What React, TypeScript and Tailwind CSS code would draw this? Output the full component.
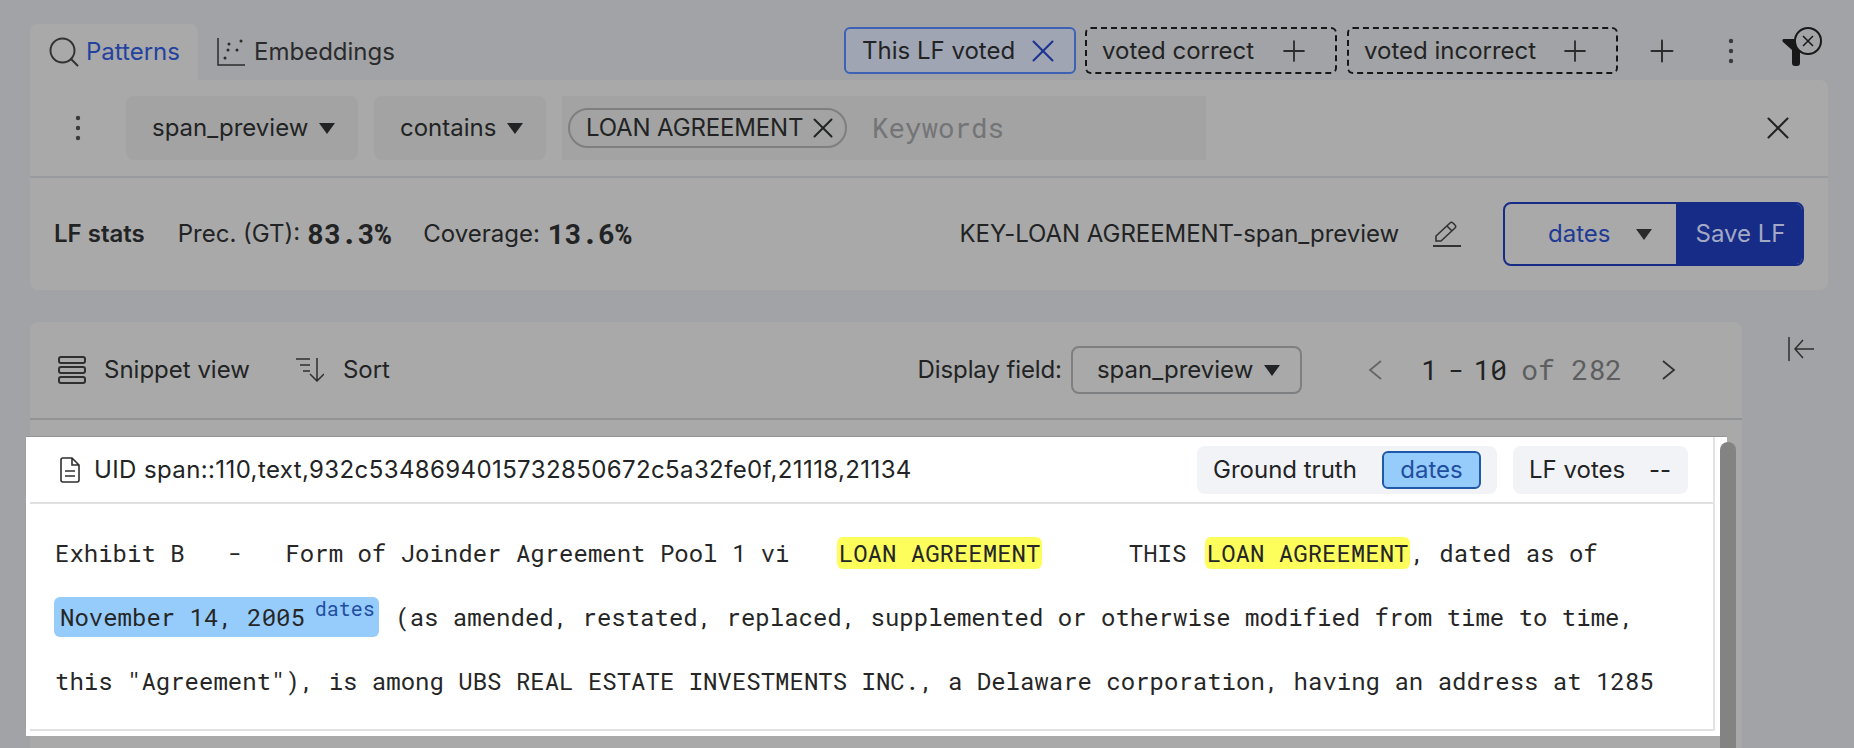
import React from "react"
import { Plus, Search, X } from "lucide-react"

const mono = "font-['Roboto_Mono','DejaVu_Sans_Mono',monospace]"

const Caret = () => (
  <svg width="16" height="11" viewBox="0 0 16 11" className="shrink-0">
    <path d="M0 0h16L8 11z" fill="currentColor" />
  </svg>
)

const Dots = () => (
  <svg width="6" height="26" viewBox="0 0 6 26" fill="#3a3a3a">
    <circle cx="3" cy="3" r="2.2" />
    <circle cx="3" cy="13" r="2.2" />
    <circle cx="3" cy="23" r="2.2" />
  </svg>
)

const EmbeddingIcon = () => (
  <svg width="28" height="28" viewBox="0 0 28 28" fill="none" stroke="currentColor" strokeWidth="1.5">
    <path d="M1 0v27h27" />
    <g fill="currentColor" stroke="none">
      <circle cx="8" cy="20" r="1.5" />
      <circle cx="12" cy="6" r="1.5" />
      <circle cx="11" cy="12" r="1.5" />
      <circle cx="20" cy="12" r="1.5" />
      <circle cx="24" cy="3" r="1.5" />
    </g>
  </svg>
)

const FilterOff = () => (
  <svg width="40" height="40" viewBox="0 0 40 40">
    <path d="M2 12h16v24a3 3 0 0 1-3 3h-2a3 3 0 0 1-3-3V23L1 15c-1-1-1-3 1-3z" fill="#181818" />
    <circle cx="26" cy="14" r="13" fill="#a3a4a7" stroke="#181818" strokeWidth="2" />
    <path d="M21 9l10 10M31 9L21 19" stroke="#181818" strokeWidth="1.5" />
  </svg>
)

const Chevron = ({ d, className }: { d: string; className: string }) => (
  <svg width="14" height="20" viewBox="0 0 14 20" fill="none" stroke="currentColor" strokeWidth="1.8" className={className}>
    <path d={d} />
  </svg>
)

const VoteChip = ({ label, width }: { label: string; width: string }) => (
  <div className={`flex h-[47px] items-center justify-between rounded-md border-2 border-dashed border-[#161616] pl-[15px] pr-[24px] ${width}`}>
    <span>{label}</span>
    <Plus size={34} strokeWidth={1.3} className="text-[#2c2c2c]" />
  </div>
)

const Highlight = ({ children }: { children: React.ReactNode }) => (
  <span className="ml-[4px] rounded-md bg-[#fdfd5c] px-[2px]">{children}</span>
)

export default function App() {
  return (
    <div className="h-[748px] overflow-hidden bg-[#a2a3a6] pl-[30px] font-['Inter',sans-serif] text-[24px] text-[#222324]">
      <div className="flex h-[80px] w-[1798px] items-start pr-[6px] pt-[24px]">
        <div className="flex h-[56px] w-[168px] items-center gap-[4px] rounded-t-lg bg-[#a9a9a9] pl-[16px]">
          <Search size={36} strokeWidth={1.3} className="text-[#333]" />
          <span className="text-[#2342a0]">Patterns</span>
        </div>
        <div className="flex h-[56px] items-center gap-[9px] pl-[19px] text-[#2a2b2c]">
          <EmbeddingIcon />
          <span>Embeddings</span>
        </div>
        <div className="ml-auto mt-[3px] flex h-[47px] items-center">
          <div className="flex h-[47px] w-[232px] items-center justify-between rounded-md border-2 border-[#3d61b4] bg-[#a0a5b4] pl-[16px] pr-[12px]">
            <span>This LF voted</span>
            <X size={38} strokeWidth={1.3} className="text-[#1b3391]" />
          </div>
          <div className="ml-[9px]">
            <VoteChip label="voted correct" width="w-[252px]" />
          </div>
          <div className="ml-[10px]">
            <VoteChip label="voted incorrect" width="w-[271px]" />
          </div>
          <Plus size={36} strokeWidth={1.3} className="ml-[26px] text-[#2c2c2c]" />
          <div className="ml-[48px]">
            <Dots />
          </div>
          <div className="ml-[48px] mt-[-7px]">
            <FilterOff />
          </div>
        </div>
      </div>

      <div className="w-[1798px] rounded-b-lg rounded-tr-lg bg-[#a9a9a9]">
        <div className="flex h-[98px] items-start border-b-2 border-[#999a9d] pt-[16px]">
          <div className="flex h-[64px] w-[96px] items-center justify-center">
            <Dots />
          </div>
          <div className="flex h-[64px] w-[232px] items-center gap-[11px] rounded-lg bg-[#a3a3a3] pl-[26px]">
            <span>span_preview</span>
            <Caret />
          </div>
          <div className="ml-[16px] flex h-[64px] w-[172px] items-center gap-[11px] rounded-lg bg-[#a3a3a3] pl-[26px]">
            <span>contains</span>
            <Caret />
          </div>
          <div className="ml-[16px] flex h-[64px] w-[644px] items-center bg-[#a3a3a3] pl-[6px]">
            <div className="flex h-[40px] w-[279px] items-center justify-between rounded-full border-2 border-[#7e7f81] pl-[16px] pr-[5px]">
              <span className="whitespace-nowrap tracking-[-0.15px]">LOAN AGREEMENT</span>
              <X size={34} strokeWidth={1.4} className="shrink-0" />
            </div>
            <span className={`ml-[25px] text-[27.5px] text-[#737476] ${mono}`}>Keywords</span>
          </div>
          <div className="ml-auto flex h-[64px] items-center pr-[31px]">
            <X size={38} strokeWidth={1.3} />
          </div>
        </div>
        <div className="flex h-[112px] items-center pl-[24px] pr-[24px]">
          <span className="font-semibold">LF stats</span>
          <span className="ml-[33px]">Prec. (GT):</span>
          <span className={`ml-[7px] text-[28px] font-bold ${mono}`}>83.3%</span>
          <span className="ml-[32px]">Coverage:</span>
          <span className={`ml-[8px] text-[28px] font-bold ${mono}`}>13.6%</span>
          <span className="ml-auto tracking-[-0.05px]">KEY-LOAN AGREEMENT-span_preview</span>
          <svg width="28" height="26" viewBox="0 0 28 26" fill="none" stroke="#333" strokeWidth="1.6" className="ml-[34px]">
            <path d="M3 15L17 2a2 2 0 0 1 3 0l2 2a2 2 0 0 1 0 3L8 20H3zM14 5l5 5" />
            <path d="M0 25h28" strokeWidth="2" />
          </svg>
          <div className="ml-[42px] flex h-[64px] w-[301px] overflow-hidden rounded-lg border-2 border-[#162c86]">
            <div className="flex flex-1 items-center gap-[26px] pl-[43px] text-[#1f3a94]">
              <span>dates</span>
              <span className="text-[#2a2a2a]"><Caret /></span>
            </div>
            <div className="flex w-[126px] items-center justify-center bg-[#162c86] pl-[3px] text-[#a3a9c4]">Save LF</div>
          </div>
        </div>
      </div>

      <div className="mt-[32px] flex items-start">
        <div className="relative h-[500px] w-[1712px] rounded-t-lg bg-[#a9a9a9]">
          <div className="flex h-[98px] items-center border-b-2 border-[#929395] pl-[28px] pr-[66px]">
            <svg width="28" height="28" viewBox="0 0 28 28" fill="none" stroke="#2f2f2f" strokeWidth="2">
              <rect x="1" y="1" width="26" height="6" rx="2" />
              <rect x="1" y="11" width="26" height="6" rx="2" />
              <rect x="1" y="21" width="26" height="6" rx="2" />
            </svg>
            <span className="ml-[18px]">Snippet view</span>
            <svg width="28" height="24" viewBox="0 0 28 24" fill="none" stroke="#2f2f2f" strokeWidth="1.5" className="ml-[46px]">
              <path d="M0 1h14M4 7h10M7 13h7M21 0v23M14 16l7 7 7-7" />
            </svg>
            <span className="ml-[19px]">Sort</span>
            <span className="ml-auto tracking-[-0.1px]">Display field:</span>
            <div className="ml-[9px] flex h-[48px] w-[231px] items-center gap-[11px] rounded-lg border-2 border-[#7e7f81] pl-[24px]">
              <span>span_preview</span>
              <Caret />
            </div>
            <Chevron d="M13 1L2 10l11 9" className="ml-[66px] text-[#666]" />
            <div className={`ml-[39px] flex text-[28px] ${mono}`}>
              <span>1</span>
              <span className="ml-[10px]">-</span>
              <span className="ml-[9px]">10</span>
              <span className="ml-[14px] text-[#5d5e60]">of 282</span>
            </div>
            <Chevron d="M1 1l11 9-11 9" className="ml-[40px] text-[#333]" />
          </div>
          <div className="relative ml-[-4px] mt-[17px] w-[1701px] bg-white pb-[5px] pl-[4px] pr-[12px] shadow-[0_-1px_0_#959595]">
            <div className="border-r-2 border-[#e4e4e4]">
              <div className="flex h-[67px] items-center border-b-2 border-[#e0e0e0] pl-[30px] pr-[25px]">
                <svg width="20" height="26" viewBox="0 0 20 26" fill="none" stroke="#2f2f2f" strokeWidth="1.6">
                  <path d="M3 1h9l7 7v15a2 2 0 0 1-2 2H3a2 2 0 0 1-2-2V3a2 2 0 0 1 2-2zM12 1v7h7M5 14h10M5 19h10" />
                </svg>
                <span className="ml-[14px] tracking-[0.39px]">UID span::110,text,932c5348694015732850672c5a32fe0f,21118,21134</span>
                <div className="ml-auto flex h-[48px] w-[300px] items-center justify-between rounded-lg bg-[#f2f3f7] pl-[16px] pr-[16px]">
                  <span>Ground truth</span>
                  <span className="flex h-[38px] w-[99px] items-center justify-center rounded-md border-2 border-[#1f5aa8] bg-[#96ccfb] text-[#1f4ea0]">dates</span>
                </div>
                <div className="ml-[16px] flex h-[48px] w-[175px] items-center justify-between rounded-lg bg-[#f2f3f7] pl-[16px] pr-[17px]">
                  <span>LF votes</span>
                  <span>--</span>
                </div>
              </div>
              <div className={`h-[225px] whitespace-pre pl-[25px] pt-[17px] text-[24px] leading-[64px] text-[#262626] ${mono}`}>
                <div>
                  {"Exhibit B   -   Form of Joinder Agreement Pool 1 vi   "}
                  <Highlight>LOAN AGREEMENT</Highlight>
                  {"      THIS "}
                  <Highlight>LOAN AGREEMENT</Highlight>
                  {", dated as of"}
                </div>
                <div>
                  <span className="ml-[-1px] mr-[2px] rounded-md bg-[#96ccfb] py-[4px] pl-[6px] pr-[4px]">
                    November 14, 2005
                    <sup className="ml-[10px] text-[20px] text-[#1f4ea0]">dates</sup>
                  </span>
                  {" (as amended, restated, replaced, supplemented or otherwise modified from time to time,"}
                </div>
                <div>this "Agreement"), is among UBS REAL ESTATE INVESTMENTS INC., a Delaware corporation, having an address at 1285</div>
              </div>
              <div className="border-b-2 border-[#e0e0e0]" />
            </div>
          </div>
          <div className="absolute left-[1690px] top-[120px] h-[400px] w-[16px] rounded-t-full bg-[#838383]" />
        </div>
        <svg width="26" height="24" viewBox="0 0 26 24" fill="none" stroke="#2f2f2f" strokeWidth="1.5" className="ml-[46px] mt-[15px]">
          <path d="M1 0v24M26 12H7M15 3l-8 9 8 9" />
        </svg>
      </div>
    </div>
  )
}
